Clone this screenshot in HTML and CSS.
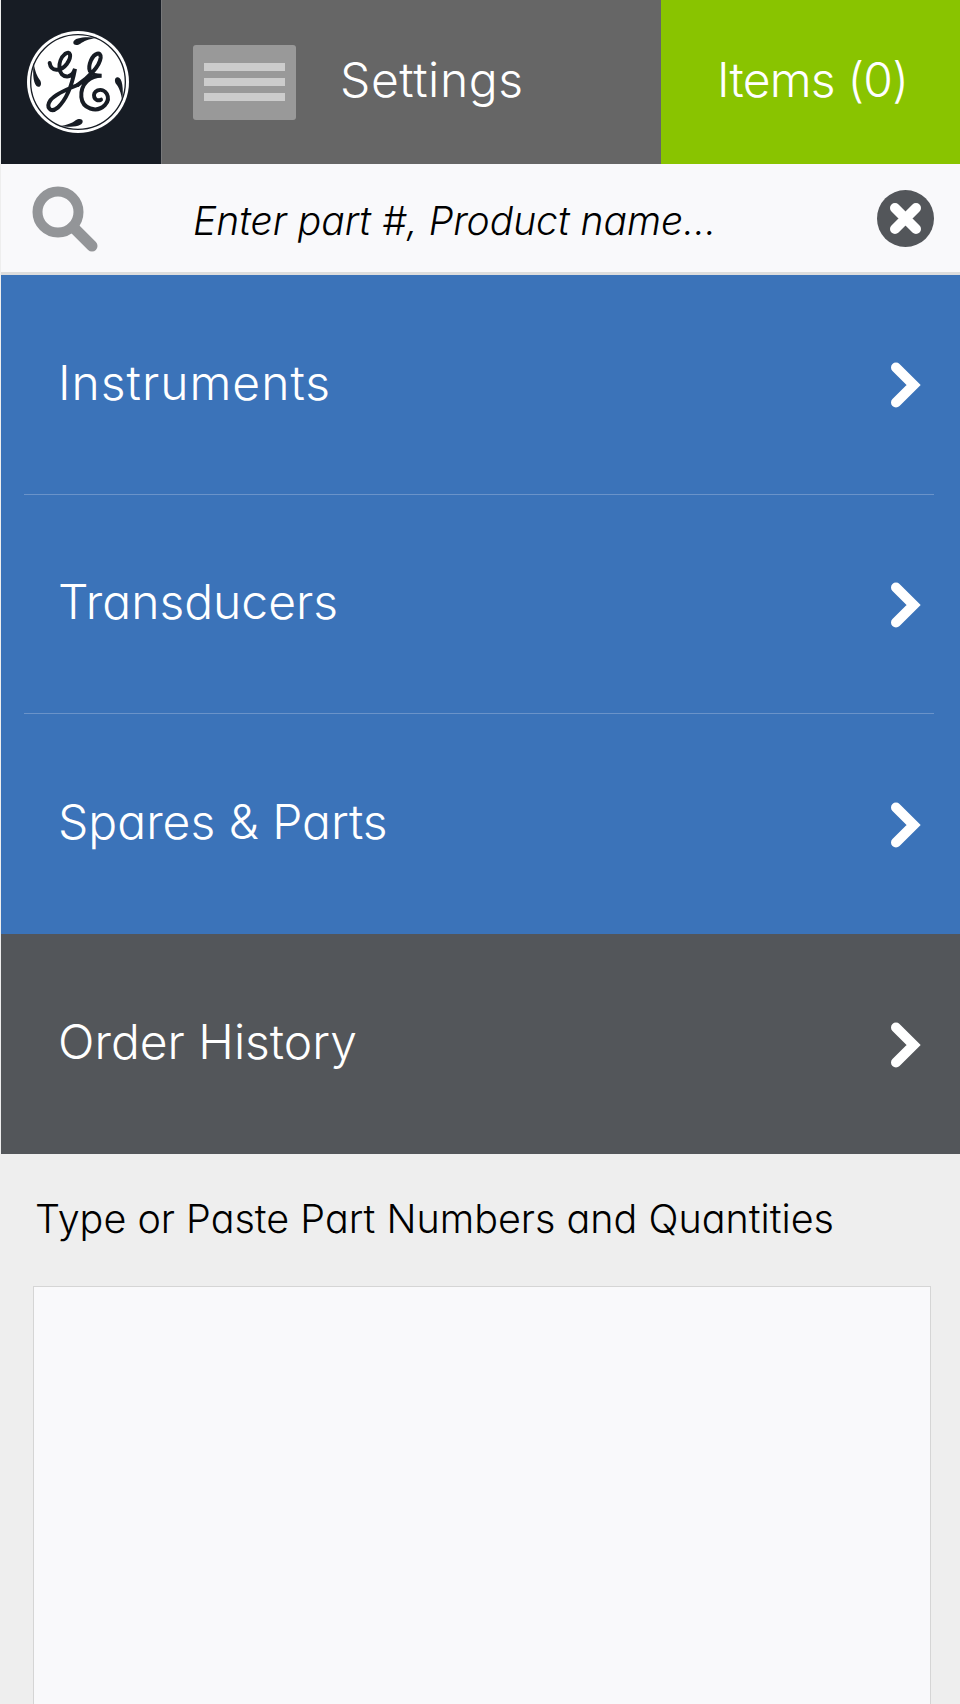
FILE: index.html
```html
<!DOCTYPE html>
<html lang="en">
<head>
    <meta charset="UTF-8">
    <meta name="viewport" content="width=device-width, initial-scale=1.0">
    <title>Order Parts</title>
    <link rel="stylesheet" href="styles.css">
</head>
<body>

    <header class="topbar">
        <div class="logo">
            <svg width="102" height="102" viewBox="80 92 306 306">
                <circle cx="233" cy="245" r="153" fill="#fff"/>
                <circle cx="233" cy="245" r="142" fill="none" stroke="#171c24" stroke-width="4"/>
                <!-- swirls on the ring -->
                <g fill="#171c24">
                    <path id="swirl" d="M219 125 C222 112 252 108 290 112 C265 116 250 122 240 130 C231 137 217 135 219 125Z"/>
                    <use href="#swirl" transform="rotate(90 233 245)"/>
                    <use href="#swirl" transform="rotate(180 233 245)"/>
                    <use href="#swirl" transform="rotate(270 233 245)"/>
                </g>
                <g fill="none" stroke="#171c24" stroke-linecap="round" stroke-width="12">
                    <!-- G -->
                    <path d="M148 188 C152 214 180 216 200 190 C216 166 210 150 194 161 C170 180 170 232 204 228 C214 226 220 218 224 206 C216 250 204 292 172 322 C150 340 136 320 150 300 C164 282 196 268 232 254"/>
                    <!-- E -->
                    <path d="M232 254 C264 232 298 198 301 172 C302 152 282 158 272 180 C262 204 262 226 304 226 C270 226 240 250 243 290 C246 324 288 340 314 314 C334 292 316 262 292 270 C272 278 282 308 302 298"/>
                </g>
            </svg>
        </div>
        <div class="settings">
            <div class="menu-btn">
                <span></span>
                <span></span>
                <span></span>
            </div>
            <span class="settings-label">Settings</span>
        </div>
        <div class="items">Items (0)</div>
    </header>

    <div class="search">
        <svg class="search-icon" width="66" height="66" viewBox="0 0 66 66">
            <circle cx="26" cy="26" r="20.5" fill="none" stroke="#939598" stroke-width="10"/>
            <path d="M41 41 L60 60" fill="none" stroke="#939598" stroke-width="11" stroke-linecap="round"/>
        </svg>
        <div class="search-text">Enter part #, Product name...</div>
        <svg class="clear-icon" width="57" height="57" viewBox="0 0 57 57">
            <circle cx="28.5" cy="28.5" r="28.5" fill="#53565a"/>
            <path d="M18 18 L39 39 M39 18 L18 39" fill="none" stroke="#fff" stroke-width="10" stroke-linecap="round"/>
        </svg>
    </div>

    <nav class="menu">
        <a class="row">
            <span class="row-inner"><span class="row-label wide">Instruments</span>
                <svg class="chevron" width="32" height="46" viewBox="0 0 32 46"><path d="M5 5.5 L22.6 23 L5 40.5" fill="none" stroke="#fff" stroke-width="10" stroke-linecap="round"/></svg>
            </span>
        </a>
        <a class="row">
            <span class="row-inner"><span class="row-label">Transducers</span>
                <svg class="chevron" width="32" height="46" viewBox="0 0 32 46"><path d="M5 5.5 L22.6 23 L5 40.5" fill="none" stroke="#fff" stroke-width="10" stroke-linecap="round"/></svg>
            </span>
        </a>
        <a class="row">
            <span class="row-inner"><span class="row-label">Spares &amp; Parts</span>
                <svg class="chevron" width="32" height="46" viewBox="0 0 32 46"><path d="M5 5.5 L22.6 23 L5 40.5" fill="none" stroke="#fff" stroke-width="10" stroke-linecap="round"/></svg>
            </span>
        </a>
        <a class="row dark">
            <span class="row-inner"><span class="row-label">Order History</span>
                <svg class="chevron" width="32" height="46" viewBox="0 0 32 46"><path d="M5 5.5 L22.6 23 L5 40.5" fill="none" stroke="#fff" stroke-width="10" stroke-linecap="round"/></svg>
            </span>
        </a>
    </nav>

    <section class="paste">
        <label class="paste-label">Type or Paste Part Numbers and Quantities</label>
        <div class="paste-box"></div>
    </section>

</body>
</html>
```

FILE: styles.css
```css
html, body {
    height: 100%;
}
body {
    font-family: Inter, Lato, sans-serif;
    font-feature-settings: "cv11" 1;
    font-weight: 300;
    background-color: #eeeeee;
    margin: 0;
    padding: 0 0 0 1px;
    box-sizing: border-box;
    overflow: hidden;
}
.topbar {
    display: flex;
    height: 164px;
    color: white;
}
.logo {
    width: 160px;
    background-color: #171c24;
    display: flex;
    align-items: center;
    justify-content: center;
    padding-right: 7px;
    box-sizing: border-box;
}
.settings {
    width: 500px;
    background-color: #666666;
    border-left: 1px solid #77787a;
    box-sizing: border-box;
    display: flex;
    align-items: center;
    padding-left: 31px;
}
.menu-btn {
    width: 103px;
    height: 75px;
    background-color: #999999;
    border-radius: 3px;
    display: flex;
    flex-direction: column;
    justify-content: center;
    gap: 7px;
    align-items: center;
}
.menu-btn span {
    width: 81px;
    height: 8px;
    background-color: #cccccc;
}
.settings-label {
    margin: 0 0 6px 44px;
    font-size: 48px;
    letter-spacing: 0.6px;
}
.items {
    flex: 1;
    background-color: #89c400;
    display: flex;
    align-items: center;
    justify-content: center;
    font-size: 48px;
    letter-spacing: -0.8px;
    padding: 0 0 6px 4px;
}
.search {
    height: 108px;
    background-color: #f9f9fb;
    border-bottom: 3px solid #dddddd;
    display: flex;
    align-items: center;
    padding-left: 31px;
}
.search-icon {
    margin-top: 2px;
}
.search-text {
    margin: 4px 0 0 95px;
    font-size: 39px;
    font-style: italic;
    color: #000;
}
.clear-icon {
    margin: 1px 26px 0 auto;
}
.row {
    display: block;
    height: 219.5px;
    background-color: #3b73b9;
    color: white;
    font-size: 48px;
    padding: 0 26px 0 23px;
}
.row.dark {
    height: 220px;
    background-color: #53565a;
    padding: 0;
}
.row-inner {
    height: 100%;
    box-sizing: border-box;
    display: flex;
    align-items: center;
    justify-content: space-between;
    padding: 0 11px 0 34px;
    border-bottom: 1px solid #6a93c9;
}
.row:nth-child(3) .row-inner,
.row.dark .row-inner {
    border-bottom: none;
}
.row.dark .row-inner {
    padding: 0 37px 0 57px;
}
.row-label {
    margin-bottom: 4px;
}
.row-label.wide {
    letter-spacing: 1px;
}
.chevron {
    margin-top: 2px;
}
.paste {
    padding: 41px 29px 0 34px;
}
.paste-label {
    display: block;
    color: #000;
    font-size: 39.5px;
}
.paste-box {
    margin-top: 43px;
    height: 600px;
    background-color: #f9f9fb;
    border: 1px solid #d5d5d5;
    margin-left: -2px;
}
```
